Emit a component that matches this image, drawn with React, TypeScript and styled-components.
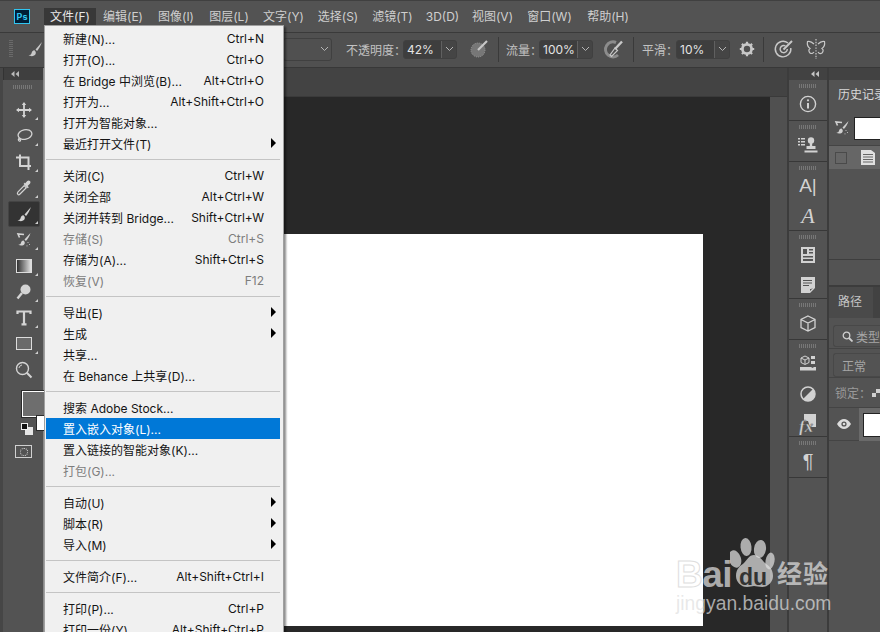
import styled, { createGlobalStyle } from 'styled-components';

const GlobalStyle = createGlobalStyle`
  html, body {
    margin: 0;
    padding: 0;
    background: #535353;
  }
  * {
    box-sizing: border-box;
  }
`;

const uiFont = `Inter, 'Noto Sans CJK SC', sans-serif`;

const Page = styled.div`
  position: relative;
  width: 880px;
  height: 632px;
  overflow: hidden;
  display: flex;
  flex-direction: column;
  background: #535353;
  font-family: ${uiFont};
  font-size: 12px;
  color: #d6d6d6;
`;

const MenuBar = styled.div`
  height: 33px;
  flex: none;
  display: flex;
  align-items: center;
  padding: 0 0 1px 14px;
  background: #535353;
  border-top: 1px solid #404040;
  border-bottom: 1px solid #3a3a3a;
`;

const PsLogo = styled.div`
  width: 16px;
  height: 15px;
  margin-right: 14px;
  border: 1px solid #31c5f0;
  background: #001e36;
  color: #31c5f0;
  font-size: 9px;
  font-weight: 700;
  line-height: 13px;
  text-align: center;
`;

const MenuTitle = styled.div<{ $open?: boolean; $w: number }>`
  width: ${(p) => p.$w}px;
  height: 17px;
  line-height: 17px;
  text-align: center;
  white-space: nowrap;
  color: ${(p) => (p.$open ? '#e8e8e8' : '#cfcfcf')};
  background: ${(p) => (p.$open ? '#383838' : 'transparent')};
`;

const OptionsBar = styled.div`
  height: 35px;
  flex: none;
  display: flex;
  align-items: center;
  padding-bottom: 2px;
  background: #505050;
  border-bottom: 1px solid #383838;
`;

const Grip = styled.div`
  width: 4px;
  height: 18px;
  margin: 0 11px 0 9px;
  background: repeating-linear-gradient(#6a6a6a 0 1px, transparent 1px 2px);
`;

const OptionIcon = styled.div<{ $ml?: number; $mr?: number }>`
  flex: none;
  width: 22px;
  height: 22px;
  margin-left: ${(p) => p.$ml ?? 0}px;
  margin-right: ${(p) => p.$mr ?? 0}px;
  display: flex;
  align-items: center;
  justify-content: center;
  color: #c8c8c8;
`;

const Combo = styled.div<{ $w: number; $ml?: number }>`
  flex: none;
  width: ${(p) => p.$w}px;
  height: 19px;
  margin-left: ${(p) => p.$ml ?? 0}px;
  display: flex;
  border: 1px solid #404040;
  border-radius: 3px;
  background: #454545;
`;

const TallCombo = styled(Combo)`
  height: 23px;
  justify-content: flex-end;
  background: #505050;
`;

const ComboValue = styled.div`
  flex: 1;
  line-height: 17px;
  padding-left: 3px;
  color: #e4e4e4;
  background: #3e3e3e;
  border-right: 1px solid #606060;
  border-radius: 2px 0 0 2px;
`;

const Chevron = styled.div`
  width: 14px;
  display: flex;
  align-items: center;
  justify-content: center;
  color: #b5b5b5;
`;

const OptionLabel = styled.div<{ $ml: number }>`
  flex: none;
  margin-left: ${(p) => p.$ml}px;
  color: #c2c2c2;
  white-space: nowrap;
`;

const OptionDivider = styled.div<{ $ml: number }>`
  flex: none;
  width: 1px;
  height: 25px;
  margin-left: ${(p) => p.$ml}px;
  background: #3a3a3a;
`;

const Workspace = styled.div`
  flex: 1;
  min-height: 0;
  display: flex;
`;

const ToolColumn = styled.div`
  width: 44px;
  flex: none;
  display: flex;
  flex-direction: column;
  background: #535353;
  border-left: 3px solid #464646;
  border-right: 1px solid #8a8a8a;
`;

const CollapseStrip = styled.div`
  height: 12px;
  flex: none;
  display: flex;
  align-items: center;
  padding-left: 7px;
  background: #3f3f3f;
  border-left: 1px solid #333;
  color: #b8b8b8;
`;

const ToolGrip = styled.div`
  width: 20px;
  height: 4px;
  margin: 5px auto 8px;
  background: repeating-linear-gradient(90deg, #777 0 1px, transparent 1px 2px);
`;

const Tool = styled.div<{ $active?: boolean; $corner?: boolean }>`
  position: relative;
  flex: none;
  width: 32px;
  height: 26px;
  margin-left: 5px;
  display: flex;
  align-items: center;
  justify-content: center;
  color: #d4d4d4;
  border-radius: 2px;
  background: ${(p) => (p.$active ? '#333333' : 'transparent')};
  border: 1px solid ${(p) => (p.$active ? '#444444' : 'transparent')};
  &::after {
    content: '';
    display: ${(p) => (p.$corner === false ? 'none' : 'block')};
    position: absolute;
    right: 1px;
    bottom: 2px;
    border-left: 3px solid transparent;
    border-bottom: 3px solid #cfcfcf;
  }
`;

const SwatchArea = styled.div`
  position: relative;
  height: 53px;
  margin-top: 8px;
  flex: none;
`;

const ForeSwatch = styled.div`
  position: absolute;
  left: 19px;
  top: 0;
  width: 26px;
  height: 26px;
  background: #6e6e6e;
  border: 1px solid #fff;
  outline: 1px solid #2b2b2b;
`;

const BackSwatch = styled.div`
  position: absolute;
  left: 33px;
  top: 24px;
  width: 10px;
  height: 16px;
  background: #fff;
  border: 1px solid #2b2b2b;
`;

const ResetColors = styled.div`
  position: absolute;
  left: 18px;
  top: 32px;
  width: 12px;
  height: 12px;
`;

const ResetBack = styled.div`
  position: absolute;
  right: 0;
  bottom: 0;
  width: 8px;
  height: 8px;
  background: #e6e6e6;
`;

const ResetFront = styled.div`
  position: absolute;
  left: 0;
  top: 0;
  width: 7px;
  height: 7px;
  background: #111;
  border: 1px solid #eee;
`;

const MaskButton = styled.div`
  flex: none;
  width: 17px;
  height: 13px;
  margin: 1px 0 0 12px;
  display: flex;
  align-items: center;
  justify-content: center;
  border: 1px solid #d0d0d0;
`;

const MaskDot = styled.div`
  width: 8px;
  height: 8px;
  border: 1px dotted #e0e0e0;
  border-radius: 50%;
`;

const DocColumn = styled.div`
  flex: 1;
  min-width: 0;
  display: flex;
  flex-direction: column;
`;

const DocTabs = styled.div`
  height: 29px;
  flex: none;
  background: #434343;
  border-bottom: 1px solid #3a3a3a;
`;

const DocBody = styled.div`
  flex: 1;
  min-height: 0;
  display: flex;
`;

const Pasteboard = styled.div`
  flex: 1;
  display: flex;
  justify-content: flex-end;
  padding: 137px 67px 6px 0;
  background: #282828;
`;

const Canvas = styled.div`
  width: 500px;
  background: #ffffff;
`;

const Scrollbar = styled.div`
  width: 17px;
  flex: none;
  background: #505050;
`;

const Dock = styled.div`
  width: 42px;
  flex: none;
  display: flex;
  flex-direction: column;
  background: #535353;
  border-left: 2px solid #3c3c3c;
  border-right: 2px solid #3c3c3c;
`;

const DockHead = styled.div`
  height: 12px;
  flex: none;
  display: flex;
  align-items: center;
  justify-content: flex-end;
  padding-right: 8px;
  background: #424242;
  color: #c4c4c4;
`;

const DockGroup = styled.div<{ $h: number }>`
  height: ${(p) => p.$h}px;
  flex: none;
  display: flex;
  flex-direction: column;
  align-items: center;
  border-bottom: 1px solid #383838;
`;

const DockGrip = styled.div`
  flex: none;
  width: 18px;
  height: 4px;
  margin: 4px 0 1px;
  background: repeating-linear-gradient(90deg, #777 0 1px, transparent 1px 2px);
`;

const DockIcon = styled.div`
  flex: none;
  width: 38px;
  height: 30px;
  display: flex;
  align-items: center;
  justify-content: center;
  color: #d2d2d2;
`;

const GlyphIcon = styled(DockIcon)<{ $font?: string; $size?: number; $italic?: boolean }>`
  font-family: ${(p) => p.$font ?? `'Liberation Sans', sans-serif`};
  font-size: ${(p) => p.$size ?? 19}px;
  font-weight: 400;
  font-style: ${(p) => (p.$italic ? 'italic' : 'normal')};
`;

const Panels = styled.div`
  width: 51px;
  flex: none;
  display: flex;
  flex-direction: column;
  overflow: hidden;
  background: #535353;
`;

const PanelTab = styled.div<{ $h: number }>`
  height: ${(p) => p.$h}px;
  flex: none;
  padding: 5px 0 0 9px;
  white-space: nowrap;
  color: #d8d8d8;
`;

const SnapshotRow = styled.div`
  height: 33px;
  flex: none;
  display: flex;
  align-items: center;
  padding: 0 0 2px 4px;
  gap: 3px;
  border-bottom: 1px solid #444;
  color: #d0d0d0;
  svg {
    flex: none;
  }
`;

const WhiteThumb = styled.div`
  flex: none;
  width: 40px;
  height: 23px;
  background: #fff;
  border: 1px solid #222;
`;

const HistoryRow = styled.div`
  height: 23px;
  flex: none;
  display: flex;
  align-items: center;
  padding-left: 6px;
  gap: 14px;
  background: #666666;
  color: #e0e0e0;
`;

const EmptyCheck = styled.div`
  flex: none;
  width: 12px;
  height: 12px;
  border: 1px solid #4a4a4a;
`;

const HistoryFill = styled.div`
  height: 91px;
  flex: none;
  border-bottom: 1px solid #3e3e3e;
`;

const PanelFoot = styled.div`
  height: 27px;
  flex: none;
  background: #535353;
  border-bottom: 2px solid #3c3c3c;
`;

const PathTab = styled.div`
  height: 31px;
  flex: none;
  background: #424242;
`;

const PathLabel = styled.div`
  width: 44px;
  height: 31px;
  line-height: 30px;
  padding-left: 9px;
  background: #4a4a4a;
  color: #c4c4c4;
`;

const FieldRow = styled.div<{ $h: number; $top: number }>`
  height: ${(p) => p.$h}px;
  flex: none;
  padding: ${(p) => p.$top}px 0 0 4px;
  border-bottom: 1px solid #444;
`;

const Field = styled.div<{ $h: number }>`
  height: ${(p) => p.$h}px;
  width: 80px;
  display: flex;
  align-items: center;
  gap: 3px;
  padding-left: 8px;
  border: 1px solid #484848;
  border-right: none;
  border-radius: 3px 0 0 3px;
  color: #a6a6a6;
  svg {
    flex: none;
  }
`;

const LockRow = styled.div`
  height: 30px;
  flex: none;
  display: flex;
  align-items: center;
  padding-left: 6px;
  gap: 1px;
  white-space: nowrap;
  color: #9a9a9a;
  border-bottom: 1px solid #444;
`;

const LockChecker = styled.div`
  flex: none;
  width: 8px;
  height: 8px;
  background: conic-gradient(#d0d0d0 25%, #555 0 50%, #d0d0d0 0 75%, #555 0);
  background-size: 8px 8px;
`;

const LayerRow = styled.div`
  height: 33px;
  flex: none;
  display: flex;
  align-items: center;
  border-bottom: 1px solid #444;
  color: #dcdcdc;
`;

const EyeCell = styled.div`
  flex: none;
  width: 30px;
  display: flex;
  justify-content: center;
`;

const LayerThumbCell = styled.div`
  flex: none;
  width: 60px;
  height: 33px;
  padding: 5px 0 0 4px;
  background: #6a6a6a;
`;

const LayerThumb = styled.div`
  width: 40px;
  height: 24px;
  background: #fff;
  border: 1px solid #222;
`;

const DropMenu = styled.div`
  position: absolute;
  left: 44px;
  top: 25px;
  width: 240px;
  height: 640px;
  padding: 2px 3px 0 1px;
  background: #f0f0f0;
  border: 1px solid #a0a0a0;
  box-shadow: 2px 2px 2px rgba(0, 0, 0, 0.45);
  color: #141414;
  font-size: 12px;
`;

const MenuRow = styled.div<{ $hot?: boolean; $off?: boolean }>`
  position: relative;
  height: 21px;
  display: flex;
  align-items: center;
  justify-content: space-between;
  padding: 0 16px 0 17px;
  white-space: nowrap;
  background: ${(p) => (p.$hot ? '#0078d7' : 'transparent')};
  color: ${(p) => (p.$hot ? '#ffffff' : p.$off ? '#7d7d7d' : '#141414')};
`;

const SubArrow = styled.div`
  position: absolute;
  right: 4px;
  top: 5px;
  border-left: 5px solid #000;
  border-top: 5px solid transparent;
  border-bottom: 5px solid transparent;
`;

const MenuSep = styled.div`
  height: 11px;
  padding-top: 5px;
  &::before {
    content: '';
    display: block;
    height: 1px;
    background: #c4c4c4;
  }
`;

const Watermark = styled.div`
  position: absolute;
  left: 676px;
  top: 536px;
  width: 160px;
  color: rgba(223, 223, 223, 0.72);
  font-family: 'Liberation Sans', sans-serif;
`;

const MarkTop = styled.div`
  height: 56px;
  display: flex;
  align-items: flex-end;
`;

const MarkBai = styled.div`
  width: 54px;
  height: 38px;
  margin-bottom: -2px;
  font-size: 37px;
  font-weight: 700;
  line-height: 38px;
  letter-spacing: -0.5px;
  white-space: nowrap;
`;

const MarkB = styled.span`
  color: #ffffff;
  -webkit-text-stroke: 1px #dedede;
`;

const MarkWord = styled.div`
  margin: 0 0 5px 1px;
  font-family: 'Noto Sans CJK SC', sans-serif;
  font-size: 25px;
  font-weight: 700;
  line-height: 30px;
  letter-spacing: 1px;
  white-space: nowrap;
`;

const MarkUrl = styled.div`
  margin-top: 1px;
  font-size: 19.3px;
  line-height: 22px;
  white-space: nowrap;
`;

const Svg = ({ size = 18, children }: { size?: number; children: React.ReactNode }) => (
  <svg width={size} height={size} viewBox="0 0 18 18" fill="none" stroke="currentColor" strokeWidth="1.4">
    {children}
  </svg>
);

const CollapseArrows = () => (
  <svg width="8" height="6" viewBox="0 0 8 6" fill="currentColor">
    <path d="M3.500 0v6L0 3ZM8 0v6L4.500 3Z" />
  </svg>
);

const BrushIcon = () => (
  <Svg>
    <path d="M16 2 9.500 9.500l1.600 1.500C13 8.500 15 5 16 2Z" fill="currentColor" stroke="none" />
    <path d="M8.500 10.300c-2 0-2.600 1.500-3 3-.3 1.200-1.200 1.800-3 2 2.600 1.400 6 1 7-1 .6-1.200.5-2.600-1-4Z" fill="currentColor" stroke="none" />
  </Svg>
);

const HistoryBrushIcon = () => (
  <Svg>
    <path d="M15.500 2 9.500 8.500l1.400 1.400C13 8 14.600 5 15.500 2Z" fill="currentColor" stroke="none" />
    <path d="M8.600 9.400c-1.800 0-2.400 1.300-2.700 2.600-.3 1-1 1.600-2.600 1.800 2.300 1.300 5.300.9 6.200-.9.5-1 .4-2.300-.9-3.500Z" fill="currentColor" stroke="none" />
    <path d="M9 3.500 3 3l1.500 3.500" strokeWidth="1.600" />
    <path d="M13 11v.8M14.500 13v.8M12 14.500v.8" strokeWidth="1" />
  </Svg>
);

const MoveIcon = () => (
  <Svg>
    <path d="M9 2.500v13M2.500 9h13" strokeWidth="1.800" />
    <path d="M9 1 6.800 4h4.400ZM9 17l-2.200-3h4.400ZM1 9l3-2.200v4.400ZM17 9l-3-2.200v4.400Z" fill="currentColor" stroke="none" />
  </Svg>
);

const LassoIcon = () => (
  <Svg>
    <ellipse cx="10" cy="7.500" rx="7" ry="4.800" transform="rotate(-12 10 7.500)" strokeWidth="1.300" />
    <path d="M4.500 11c-1.500 1-1.500 2.400-.4 3 .8.500 1.600 0 1.400-1-.2-.9-1.300-1-1.700-.2" strokeWidth="1.200" />
  </Svg>
);

const CropIcon = () => (
  <Svg>
    <path d="M5 1.500V13h11M1 4.500h3M5 4.500h8.500V12M13.500 14v3" strokeWidth="2" />
  </Svg>
);

const PipetteIcon = () => (
  <Svg>
    <path d="M3 15.500c-.8-.8-.8-1.800 0-2.600L9.200 6.700l2.100 2.100L5 15c-.6.600-1.300 1.100-2 .5Z" strokeWidth="1.200" />
    <path d="M8.800 5.200 12.800 9.200l1-1-1.200-1.200 2.300-2.300c.8-.9.700-1.900 0-2.600-.7-.7-1.800-.8-2.600 0L10 4.400 9 3.400Z" fill="currentColor" stroke="none" />
  </Svg>
);

const GradientIcon = () => (
  <svg width="16" height="14" viewBox="0 0 16 14">
    <defs>
      <linearGradient id="toolGrad" x1="0" x2="1" y1="0" y2="0">
        <stop offset="0" stopColor="#2a2a2a" />
        <stop offset="1" stopColor="#e8e8e8" />
      </linearGradient>
    </defs>
    <rect x="0.5" y="0.5" width="15" height="13" fill="url(#toolGrad)" stroke="#dddddd" />
  </svg>
);

const DodgeIcon = () => (
  <Svg>
    <circle cx="10.500" cy="6.500" r="5" fill="currentColor" stroke="none" />
    <path d="M7 10 2.500 15.500" strokeWidth="2.400" />
  </Svg>
);

const TypeIcon = () => (
  <Svg>
    <path d="M2.500 5V2.500h13V5M9 2.500V15M6.500 15.300h5" strokeWidth="2.200" />
  </Svg>
);

const RectIcon = () => (
  <svg width="16" height="14" viewBox="0 0 16 14">
    <rect x="0.5" y="0.5" width="15" height="12" fill="#6a6a6a" stroke="#dcdcdc" />
  </svg>
);

const ZoomIcon = () => (
  <Svg>
    <circle cx="7.500" cy="7.500" r="6" strokeWidth="1.400" />
    <path d="M11.800 11.800 16.500 16.500" strokeWidth="2" />
    <path d="M4 7c.3-1.500 1.500-2.800 3-3" strokeWidth="1" />
  </Svg>
);

const SmallChevron = () => (
  <svg width="9" height="6" viewBox="0 0 9 6" fill="none" stroke="currentColor" strokeWidth="1">
    <path d="M1 1l3.500 3.500L8 1" />
  </svg>
);

const TabletPressureIcon = () => (
  <svg width="22" height="22" viewBox="0 0 22 22" fill="none" stroke="currentColor">
    <circle cx="10" cy="12" r="7" fill="#777" stroke="#9a9a9a" strokeDasharray="1 1" />
    <path d="M19 3 10 12" strokeWidth="2.200" />
  </svg>
);

const AirbrushIcon = () => (
  <svg width="22" height="22" viewBox="0 0 22 22" fill="none" stroke="currentColor">
    <path d="M13 4.500a7.500 7.500 0 1 0 2 12.500" stroke="#8c8c8c" strokeWidth="3" />
    <path d="M19 3.500 12 11" strokeWidth="2.400" />
    <path d="M12 10 7 17l1.500 1.500 6-6Z" strokeWidth="1.200" />
  </svg>
);

const GearIcon = () => (
  <svg width="16" height="16" viewBox="0 0 16 16">
    <circle cx="8" cy="8" r="4.600" fill="none" stroke="currentColor" strokeWidth="2.800" />
    <path d="M8 .8v14.400M.8 8h14.400M2.900 2.900l10.200 10.200M13.100 2.900 2.900 13.100" stroke="currentColor" strokeWidth="2.200" strokeDasharray="2.600 9.200" />
  </svg>
);

const TargetIcon = () => (
  <svg width="22" height="22" viewBox="0 0 22 22" fill="none" stroke="currentColor" strokeWidth="1.400">
    <path d="M15 5a7.800 7.800 0 1 0 2.800 5" />
    <path d="M12.500 8a3.600 3.600 0 1 0 1.800 3" />
    <path d="M19 3 10.500 11.500" strokeWidth="2" />
  </svg>
);

const ButterflyIcon = () => (
  <svg width="22" height="22" viewBox="0 0 22 22" fill="none" stroke="currentColor" strokeWidth="1.200">
    <path d="M11 1v20" strokeDasharray="1.400 1.400" />
    <path d="M9 6C7 4 4 3 2.500 3.500 2 6 3 9 5 10.500c-1.500 1-1.500 3 0 4.500 1.500 1 3 .5 4-1" />
    <path d="M13 6c2-2 5-3 6.500-2.500.5 2.500-.5 5.500-2.500 7 1.500 1 1.500 3 0 4.500-1.500 1-3 .5-4-1" />
  </svg>
);

const InfoIcon = () => (
  <svg width="18" height="18" viewBox="0 0 18 18" fill="none" stroke="currentColor" strokeWidth="1.400">
    <circle cx="9" cy="9" r="7.600" />
    <path d="M9 8v5.500" strokeWidth="2" />
    <circle cx="9" cy="5.300" r="1.100" fill="currentColor" stroke="none" />
  </svg>
);

const StampIcon = () => (
  <svg width="20" height="16" viewBox="0 0 20 16" fill="currentColor">
    <path d="M0 1h2v1.500H0zM3 1h4v1.500H3zM0 4h2v1.500H0zM3 4h4v1.500H3zM0 7h2v1.500H0zM3 7h4v1.500H3z" />
    <circle cx="13" cy="3.500" r="3.200" />
    <path d="M11.800 5h2.400v4h3.300v3H8.500V9h3.300zM6.500 13.500h13V15.500h-13z" />
  </svg>
);

const BookIcon = () => (
  <svg width="14" height="16" viewBox="0 0 14 16" fill="currentColor">
    <path d="M0 0h14v16H0zM2 2v5h4V2zm6 0v1.500h4V2zm0 3v1.500h4V5zM2 9v1.500h10V9zM2 12v2h10v-2z" fillRule="evenodd" />
  </svg>
);

const NoteIcon = () => (
  <svg width="14" height="16" viewBox="0 0 14 16" fill="currentColor">
    <path d="M0 0h14v11l-5 5H0zM2 3v1h9V3zm0 2.500v1h9v-1zM2 8v1h6V8zm8 4-1 0v2l3-3z" fillRule="evenodd" />
  </svg>
);

const CubeIcon = () => (
  <svg width="16" height="17" viewBox="0 0 16 17" fill="none" stroke="currentColor" strokeWidth="1.300">
    <path d="M8 1 15 4.500v8L8 16 1 12.500v-8ZM1 4.500 8 8l7-3.500M8 8v8" />
  </svg>
);

const AdjustIcon = () => (
  <svg width="16" height="18" viewBox="0 0 16 18" fill="currentColor">
    <path d="M5 1 9 3v4.500L5 9.500 1 7.500V3Z" fill="none" stroke="currentColor" />
    <path d="M5 5v4M1 3l4 2 4-2" fill="none" stroke="currentColor" />
    <path d="M11 1h4v3h-4zM11 6h4v3h-4zM0 12h11l1.500 1 1.500-1h2v3.500H0z" />
  </svg>
);

const ContrastIcon = () => (
  <svg width="16" height="16" viewBox="0 0 16 16">
    <circle cx="8" cy="8" r="7" fill="none" stroke="currentColor" strokeWidth="1.500" />
    <path d="M13 3A7 7 0 0 1 3 13Z" fill="currentColor" />
  </svg>
);

const FxIcon = () => (
  <svg width="18" height="22" viewBox="0 0 18 22">
    <path d="M5 1h12v13h-6l-2-6H5Z" fill="currentColor" />
    <text x="0" y="19" fontFamily="'Liberation Serif', serif" fontStyle="italic" fontSize="17" fontWeight="700" fill="currentColor" stroke="#535353" strokeWidth="0.4">fx</text>
  </svg>
);

const DocIcon = () => (
  <svg width="14" height="15" viewBox="0 0 14 15" fill="currentColor">
    <path d="M0 0h10l4 3v12H0zM2 4v1h10V4zm0 2.500v1h10v-1zM2 9v1h10V9zm0 2.500v1h10v-1z" fillRule="evenodd" />
  </svg>
);

const SearchIcon = () => (
  <svg width="11" height="11" viewBox="0 0 11 11" fill="none" stroke="#cfcfcf" strokeWidth="1.300">
    <circle cx="4.500" cy="4.500" r="3.300" />
    <path d="M7 7l3.500 3.500" strokeWidth="1.800" />
  </svg>
);

const EyeIcon = () => (
  <svg width="14" height="10" viewBox="0 0 14 10">
    <path d="M0 5c2-3.500 4.500-5 7-5s5 1.500 7 5c-2 3.500-4.500 5-7 5S2 8.500 0 5Z" fill="currentColor" />
    <circle cx="7" cy="5" r="2.600" fill="#535353" />
    <circle cx="7" cy="5" r="1.300" fill="currentColor" />
  </svg>
);

const PawMark = () => (
  <svg width="46" height="56" viewBox="0 0 46 56" fill="currentColor">
    <ellipse cx="5" cy="23" rx="6" ry="9" transform="rotate(-18 5 23)" />
    <ellipse cx="16" cy="11" rx="5.500" ry="9" transform="rotate(-6 16 11)" />
    <ellipse cx="30" cy="13" rx="6" ry="9" transform="rotate(8 30 13)" />
    <ellipse cx="40" cy="25" rx="4.500" ry="8.500" transform="rotate(10 40 25)" />
    <path d="M24 19c-5 0-7 5-10 8-4 3-8 6-8 13 0 6 5 11 11 11 3 0 5-1 7-1s5 1 8 1c6 0 11-5 11-11 0-7-4-10-8-13-3-3-6-8-11-8Z" />
    <text x="9" y="49" fontFamily="'Liberation Sans', sans-serif" fontWeight="700" fontSize="23" fill="#333333">du</text>
  </svg>
);

const titles: [string, number][] = [
  ['文件(F)', 52],
  ['编辑(E)', 54],
  ['图像(I)', 52],
  ['图层(L)', 54],
  ['文字(Y)', 55],
  ['选择(S)', 54],
  ['滤镜(T)', 55],
  ['3D(D)', 45],
  ['视图(V)', 55],
  ['窗口(W)', 59],
  ['帮助(H)', 58],
];

type Item = { label?: string; keys?: string; hot?: boolean; off?: boolean; sub?: boolean };

const items: Item[] = [
  { label: '新建(N)...', keys: 'Ctrl+N' },
  { label: '打开(O)...', keys: 'Ctrl+O' },
  { label: '在 Bridge 中浏览(B)...', keys: 'Alt+Ctrl+O' },
  { label: '打开为...', keys: 'Alt+Shift+Ctrl+O' },
  { label: '打开为智能对象...' },
  { label: '最近打开文件(T)', sub: true },
  {},
  { label: '关闭(C)', keys: 'Ctrl+W' },
  { label: '关闭全部', keys: 'Alt+Ctrl+W' },
  { label: '关闭并转到 Bridge...', keys: 'Shift+Ctrl+W' },
  { label: '存储(S)', keys: 'Ctrl+S', off: true },
  { label: '存储为(A)...', keys: 'Shift+Ctrl+S' },
  { label: '恢复(V)', keys: 'F12', off: true },
  {},
  { label: '导出(E)', sub: true },
  { label: '生成', sub: true },
  { label: '共享...' },
  { label: '在 Behance 上共享(D)...' },
  {},
  { label: '搜索 Adobe Stock...' },
  { label: '置入嵌入对象(L)...', hot: true },
  { label: '置入链接的智能对象(K)...' },
  { label: '打包(G)...', off: true },
  {},
  { label: '自动(U)', sub: true },
  { label: '脚本(R)', sub: true },
  { label: '导入(M)', sub: true },
  {},
  { label: '文件简介(F)...', keys: 'Alt+Shift+Ctrl+I' },
  {},
  { label: '打印(P)...', keys: 'Ctrl+P' },
  { label: '打印一份(Y)', keys: 'Alt+Shift+Ctrl+P' },
];

const App = () => {
  return (
    <Page>
      <GlobalStyle />
      <MenuBar>
        <PsLogo>Ps</PsLogo>
        {titles.map(([t, w], i) => (
          <MenuTitle key={t} $w={w} $open={i === 0}>
            {t}
          </MenuTitle>
        ))}
      </MenuBar>

      <OptionsBar>
        <Grip />
        <OptionIcon>
          <BrushIcon />
        </OptionIcon>
        <TallCombo $w={49} $ml={237}>
          <Chevron>
            <SmallChevron />
          </Chevron>
        </TallCombo>
        <OptionLabel $ml={14}>不透明度：</OptionLabel>
        <Combo $w={54} $ml={-3}>
          <ComboValue>42%</ComboValue>
          <Chevron>
            <SmallChevron />
          </Chevron>
        </Combo>
        <OptionIcon $ml={11}>
          <TabletPressureIcon />
        </OptionIcon>
        <OptionDivider $ml={8} />
        <OptionLabel $ml={7}>流量：</OptionLabel>
        <Combo $w={54} $ml={-3}>
          <ComboValue>100%</ComboValue>
          <Chevron>
            <SmallChevron />
          </Chevron>
        </Combo>
        <OptionIcon $ml={10}>
          <AirbrushIcon />
        </OptionIcon>
        <OptionDivider $ml={8} />
        <OptionLabel $ml={8}>平滑：</OptionLabel>
        <Combo $w={54} $ml={-2}>
          <ComboValue>10%</ComboValue>
          <Chevron>
            <SmallChevron />
          </Chevron>
        </Combo>
        <OptionIcon $ml={6}>
          <GearIcon />
        </OptionIcon>
        <OptionDivider $ml={5} />
        <OptionIcon $ml={9}>
          <TargetIcon />
        </OptionIcon>
        <OptionIcon $ml={10}>
          <ButterflyIcon />
        </OptionIcon>
      </OptionsBar>

      <Workspace>
        <ToolColumn>
          <CollapseStrip>
            <CollapseArrows />
          </CollapseStrip>
          <ToolGrip />
          <Tool><MoveIcon /></Tool>
          <Tool><LassoIcon /></Tool>
          <Tool><CropIcon /></Tool>
          <Tool><PipetteIcon /></Tool>
          <Tool $active><BrushIcon /></Tool>
          <Tool><HistoryBrushIcon /></Tool>
          <Tool><GradientIcon /></Tool>
          <Tool><DodgeIcon /></Tool>
          <Tool><TypeIcon /></Tool>
          <Tool><RectIcon /></Tool>
          <Tool $corner={false}><ZoomIcon /></Tool>
          <SwatchArea>
            <ForeSwatch />
            <BackSwatch />
            <ResetColors>
              <ResetBack />
              <ResetFront />
            </ResetColors>
          </SwatchArea>
          <MaskButton>
            <MaskDot />
          </MaskButton>
        </ToolColumn>

        <DocColumn>
          <DocTabs />
          <DocBody>
            <Pasteboard>
              <Canvas />
            </Pasteboard>
            <Scrollbar />
          </DocBody>
        </DocColumn>

        <Dock>
          <DockHead>
            <CollapseArrows />
          </DockHead>
          <DockGroup $h={41}>
            <DockGrip />
            <DockIcon><InfoIcon /></DockIcon>
          </DockGroup>
          <DockGroup $h={41}>
            <DockGrip />
            <DockIcon><StampIcon /></DockIcon>
          </DockGroup>
          <DockGroup $h={69}>
            <DockGrip />
            <GlyphIcon>A|</GlyphIcon>
            <GlyphIcon $font="'Liberation Serif', serif" $size={22} $italic>A</GlyphIcon>
          </DockGroup>
          <DockGroup $h={68}>
            <DockGrip />
            <DockIcon><BookIcon /></DockIcon>
            <DockIcon><NoteIcon /></DockIcon>
          </DockGroup>
          <DockGroup $h={41}>
            <DockGrip />
            <DockIcon><CubeIcon /></DockIcon>
          </DockGroup>
          <DockGroup $h={97}>
            <DockGrip />
            <DockIcon><AdjustIcon /></DockIcon>
            <DockIcon><ContrastIcon /></DockIcon>
            <DockIcon><FxIcon /></DockIcon>
          </DockGroup>
          <DockGroup $h={41}>
            <DockGrip />
            <GlyphIcon $size={20}>¶</GlyphIcon>
          </DockGroup>
        </Dock>

        <Panels>
          <DockHead />
          <PanelTab $h={33}>历史记录</PanelTab>
          <SnapshotRow>
            <HistoryBrushIcon />
            <WhiteThumb />
          </SnapshotRow>
          <HistoryRow>
            <EmptyCheck />
            <DocIcon />
          </HistoryRow>
          <HistoryFill />
          <PanelFoot />
          <PathTab>
            <PathLabel>路径</PathLabel>
          </PathTab>
          <FieldRow $h={31} $top={7}>
            <Field $h={22}>
              <SearchIcon />
              类型
            </Field>
          </FieldRow>
          <FieldRow $h={29} $top={4}>
            <Field $h={24}>正常</Field>
          </FieldRow>
          <LockRow>
            锁定：
            <LockChecker />
          </LockRow>
          <LayerRow>
            <EyeCell><EyeIcon /></EyeCell>
            <LayerThumbCell>
              <LayerThumb />
            </LayerThumbCell>
          </LayerRow>
        </Panels>
      </Workspace>

      <DropMenu>
        {items.map((item, i) =>
          item.label ? (
            <MenuRow key={i} $hot={item.hot} $off={item.off}>
              <span>{item.label}</span>
              {item.keys && <span>{item.keys}</span>}
              {item.sub && <SubArrow />}
            </MenuRow>
          ) : (
            <MenuSep key={i} />
          ),
        )}
      </DropMenu>

      <Watermark>
        <MarkTop>
          <MarkBai><MarkB>B</MarkB>ai</MarkBai>
          <PawMark />
          <MarkWord>经验</MarkWord>
        </MarkTop>
        <MarkUrl>jingyan.baidu.com</MarkUrl>
      </Watermark>
    </Page>
  );
};

export default App;
